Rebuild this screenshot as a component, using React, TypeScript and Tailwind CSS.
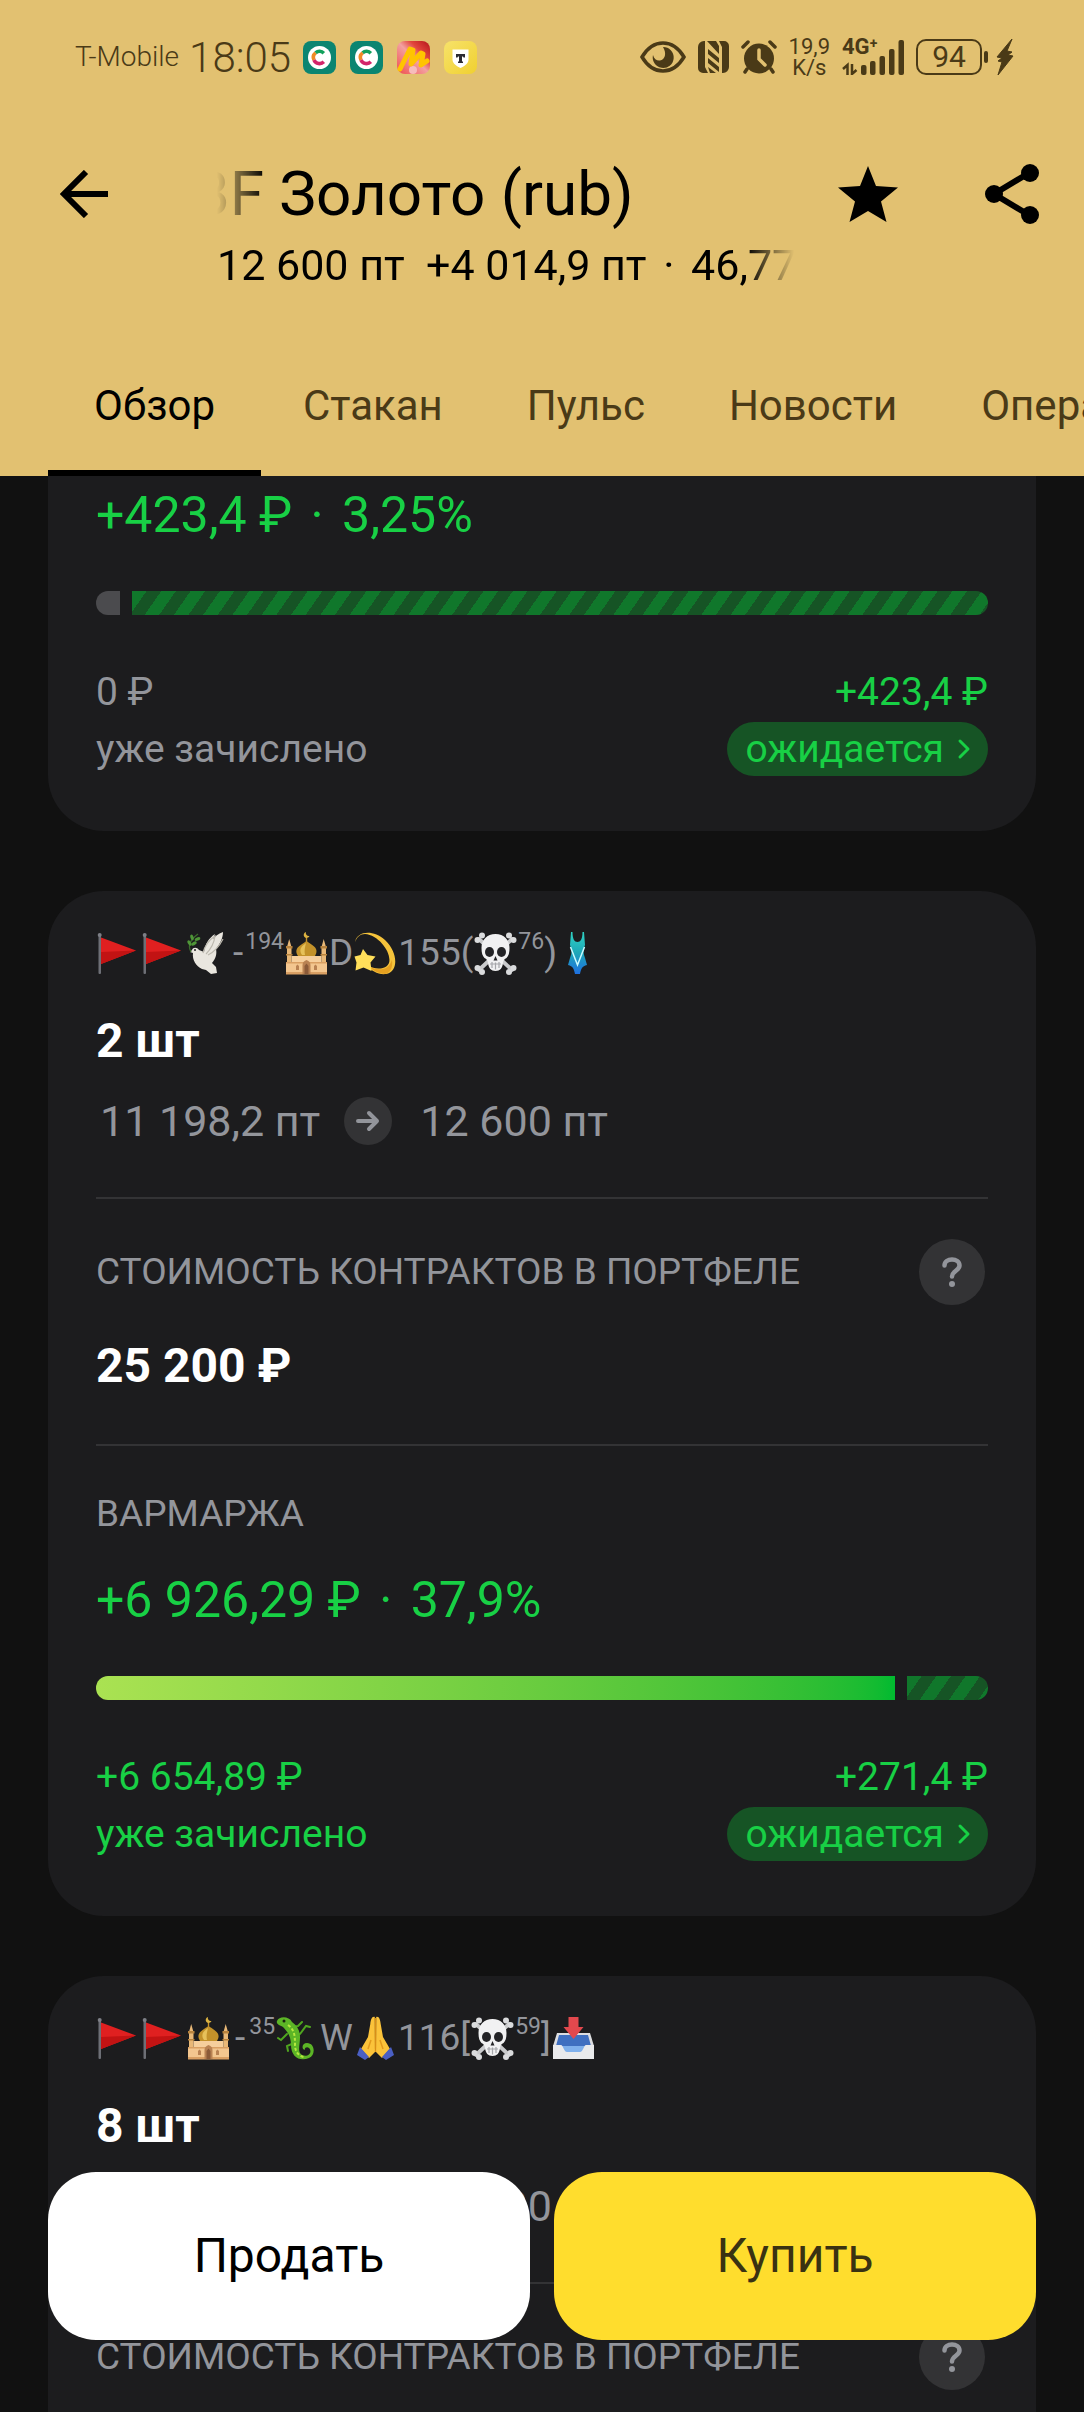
import { useState, type ReactNode } from 'react';

const tabs = ['Обзор', 'Стакан', 'Пульс', 'Новости', 'Операции'];

type Margin = {
  total: string;
  percent: string;
  credited: string;
  expected: string;
  ratio: number;
};

/* ---------- status bar icons ---------- */

function CashbackIcon() {
  return (
    <svg viewBox="0 0 33 33" className="size-[33px]" aria-hidden="true">
      <rect width="33" height="33" rx="8" fill="#0b8571" />
      <circle cx="16.5" cy="16.5" r="11.5" fill="#fff" />
      <g fill="none" strokeWidth="3.6">
        <path d="M12.6 11.8A6 6 0 0 1 20.8 12.2" stroke="#12a05c" />
        <path d="M12.6 11.8A6 6 0 0 0 11 19" stroke="#f08a24" />
        <path d="M11 19A6 6 0 0 0 20.8 20.8" stroke="#d3246a" />
      </g>
    </svg>
  );
}

function MarketIcon() {
  return (
    <svg viewBox="0 0 33 33" className="size-[33px]" aria-hidden="true">
      <defs>
        <linearGradient id="market" x1="0" y1="1" x2="1" y2="0">
          <stop offset="0" stopColor="#ef4b4b" />
          <stop offset=".5" stopColor="#f3a0a0" />
          <stop offset=".7" stopColor="#e2463c" />
          <stop offset="1" stopColor="#b3131b" />
        </linearGradient>
      </defs>
      <rect width="33" height="33" rx="8" fill="url(#market)" />
      <circle cx="16" cy="29" r="4" fill="#f6bcbc" />
      <path
        d="M3 28 13 8l3 1-2 14L24 12l2 1-2 11 6-4"
        fill="none"
        stroke="#ffc400"
        strokeWidth="5"
        strokeLinejoin="round"
        strokeLinecap="round"
      />
    </svg>
  );
}

function BankIcon() {
  return (
    <svg viewBox="0 0 33 33" className="size-[33px]" aria-hidden="true">
      <defs>
        <linearGradient id="bank" x1="0" y1="0" x2="1" y2="1">
          <stop offset="0" stopColor="#f7e26a" />
          <stop offset="1" stopColor="#f0d030" />
        </linearGradient>
      </defs>
      <rect width="33" height="33" rx="8" fill="url(#bank)" />
      <path d="M8.5 8.5h16v10c0 4-4 6.5-8 8.5-4-2-8-4.5-8-8.5z" fill="#fff" />
      <path d="M12 13h9v3.5h-1.5l-.5-1h-1v5h1V22h-5v-1.500h1v-5h-1l-.5 1H12z" fill="#2b2b33" />
    </svg>
  );
}

function EyeIcon() {
  return (
    <svg viewBox="0 0 46 32" className="h-8 w-[46px]" aria-hidden="true">
      <path d="M2 16C8 6 15 2 23 2s15 4 21 14c-6 10-13 14-21 14S8 26 2 16z" fill="none" stroke="currentColor" strokeWidth="3.5" />
      <path d="M23 6a10.5 10.5 0 1 1-10 8c1 4 4 6 7 5.500 5-.8 7-7 3-13.500z" fill="currentColor" />
    </svg>
  );
}

function NfcIcon() {
  return (
    <svg viewBox="0 0 31 32" className="h-8 w-[31px]" aria-hidden="true">
      <path d="M6 0h1v26l3 6H5a5 5 0 0 1-5-5V6a6 6 0 0 1 6-6zM21 0h5a5 5 0 0 1 5 5v21a6 6 0 0 1-6 6h-1V6z" fill="currentColor" />
      <path d="M9 0h9l3 5v8zM10 8l11 9v5L10 13zM10 17l11 9v5L10 22zM10 26l8 6h-6z" fill="currentColor" />
    </svg>
  );
}

function AlarmIcon() {
  return (
    <svg viewBox="0 0 36 34" className="h-[34px] w-9" aria-hidden="true">
      <circle cx="18" cy="18.5" r="15" fill="currentColor" />
      <path d="M2 7l5-5M34 7l-5-5M6 29l-2 3M30 29l2 3" fill="none" stroke="currentColor" strokeWidth="3.5" strokeLinecap="round" />
      <path d="M18 10v9l6 6" fill="none" stroke="#e2c171" strokeWidth="3.5" strokeLinecap="round" />
    </svg>
  );
}

function SignalIcon() {
  return (
    <svg viewBox="0 0 62 36" className="h-9 w-[62px]" aria-hidden="true">
      <g fill="currentColor">
        <rect x="19" y="26" width="5.5" height="10" rx="2" />
        <rect x="28" y="22" width="5.5" height="14" rx="2" />
        <rect x="37.5" y="17" width="5.5" height="19" rx="2" />
        <rect x="47" y="10" width="5.5" height="26" rx="2" />
        <rect x="56.5" y="1" width="5.5" height="35" rx="2" />
      </g>
      <path d="M1 30l4.500-4v10M10 25v10l4.500-4" fill="none" stroke="currentColor" strokeWidth="2.5" />
    </svg>
  );
}

function BoltIcon() {
  return (
    <svg viewBox="0 0 18 38" className="-ml-1 h-[38px] w-[18px]" aria-hidden="true">
      <path d="M16 1 1 19l5 1-4 3 4 1-4 13 15-19-5-1 4-3-5-1z" fill="currentColor" stroke="currentColor" strokeLinejoin="round" />
    </svg>
  );
}

/* ---------- emoji for contract names ---------- */

function Emoji({ label, children }: { label: string; children: ReactNode }) {
  return (
    <svg viewBox="0 0 45 44" className="h-11 w-[45px] shrink-0" role="img" aria-label={label}>
      {children}
    </svg>
  );
}

function Flag() {
  return (
    <Emoji label="флаг">
      <rect x="2.5" y="4" width="2.5" height="39" rx="1" fill="#6d6f76" />
      <circle cx="3.7" cy="4" r="2" fill="#7d7f86" />
      <path d="M5 6.500 40 19.500 5 33z" fill="#e02020" />
      <path d="M5 21 40 19.500 5 33z" fill="#c21313" />
    </Emoji>
  );
}

function Dove() {
  return (
    <Emoji label="голубь">
      <path d="M13 19c-2-3-6-3-7 0l-2 2 3 1c-1 7 3 13 9 16l4 1 5 4 6-1-1-6-4-4c4-5 5-9 4-14 4-5 7-11 7-17-5 2-8 4-10 7l2-5c-6 4-10 10-11 18z" fill="#e9e6df" />
      <path d="M17 22c2-8 6-13 12-17-1 8-4 13-9 18M22 24c6-3 11-8 15-16" fill="none" stroke="#bcb8ae" strokeWidth="1.2" />
      <circle cx="9" cy="19" r="1" fill="#222" />
      <path d="M5 21C1 14 5 8 12 3" fill="none" stroke="#3b6b2c" strokeWidth="1.3" />
      <g fill="#4f9638">
        <ellipse cx="3.5" cy="12" rx="1.6" ry="3" transform="rotate(-30 3.5 12)" />
        <ellipse cx="8" cy="12.5" rx="1.6" ry="3" transform="rotate(60 8 12.5)" />
        <ellipse cx="6" cy="6.5" rx="1.6" ry="3" transform="rotate(-20 6 6.5)" />
        <ellipse cx="11.5" cy="8" rx="1.6" ry="3" transform="rotate(70 11.5 8)" />
      </g>
    </Emoji>
  );
}

function Mosque() {
  return (
    <Emoji label="мечеть">
      <g fill="#e9b877">
        <rect x="3" y="16" width="4.5" height="27" />
        <rect x="37.5" y="16" width="4.5" height="27" />
        <path d="M3 16 5.200 8 7.500 16zM37.500 16 39.700 8 42 16z" />
      </g>
      <g fill="#b8833e">
        <rect x="2" y="15" width="6.5" height="2.5" />
        <rect x="36.5" y="15" width="6.5" height="2.5" />
        <rect x="2" y="23" width="6.5" height="1.5" />
        <rect x="36.5" y="23" width="6.5" height="1.5" />
      </g>
      <path d="M7.500 25h30v18h-30z" fill="#f6cf9c" />
      <path d="M2 32h41v11H2z" fill="#f3c68f" />
      <path d="M2 31h41v1.500H2zM2 41h41v2.500H2z" fill="#d99f63" />
      <path d="M14 25c-5-8 3-11 8.500-15 5.500 4 13.500 7 8.500 15z" fill="#c3922a" />
      <path d="M18 24c-4-6 0-9 4-12-1 4-2 8-1 12z" fill="#e6c15a" />
      <path d="M21.800 6h1.400v5h-1.400z" fill="#c3922a" />
      <path d="M22 1a3 3 0 1 0 3.500 4A3 3 0 0 1 22 1z" fill="#ddb341" />
      <path d="M18.500 43V34c0-3 2-4 4-5 2 1 4 2 4 5v9z" fill="#b98252" />
      <path d="M20.500 43v-8l2-2.500 2 2.500v8z" fill="#8b5a38" />
      <path d="M12 39v-4l1.500-1.500L15 35v4zM30 39v-4l1.500-1.500L33 35v4z" fill="#b98252" />
    </Emoji>
  );
}

function Dizzy() {
  return (
    <Emoji label="падающая звезда">
      <path d="M2 11C4 0 20-2 32 9c13 12 14 32 1 34-7 1-15-3-20-9 9 5 20 5 23-2C39 22 26 4 12 3 7 3 4 6 2 11z" fill="#f5c33b" />
      <path d="M14 34c9 6 21 7 25-5 1 8-2 13-7 14-6 0-13-4-18-9z" fill="#e5a021" />
      <path d="m10 18 4.500 6 8 1.500-5 6 1 8.500-8-3.500-8 3 1-8-2-6 6-1.500z" fill="#ffdf5a" />
    </Emoji>
  );
}

function Skull() {
  return (
    <Emoji label="череп и кости">
      <path d="M6 8 39 39M39 8 6 39" stroke="#c9cacc" strokeWidth="4" strokeLinecap="round" />
      <g fill="#dadbdd">
        <circle cx="4.5" cy="9" r="3" />
        <circle cx="9" cy="4.5" r="3" />
        <circle cx="40.5" cy="9" r="3" />
        <circle cx="36" cy="4.5" r="3" />
        <circle cx="4.5" cy="37" r="3" />
        <circle cx="9" cy="41" r="3" />
        <circle cx="40.5" cy="37" r="3" />
        <circle cx="36" cy="41" r="3" />
      </g>
      <path d="M22.500 3C14 3 8.500 9 8.500 17c0 5 1 8 3 10 2 1 3 2 3.500 5 .5 5 3 8 7.500 8s7-3 7.500-8c.5-3 1.500-4 3.500-5 2-2 3-5 3-10 0-8-5.500-14-14-14z" fill="#f1f1f2" />
      <g fill="#232326">
        <ellipse cx="16.5" cy="21" rx="4.5" ry="5" />
        <ellipse cx="28.5" cy="21" rx="4.5" ry="5" />
        <path d="m22.500 25-2 4.500h4z" />
      </g>
      <path d="M17 33h11M19 31v6M22.500 31.500v7M26 31v6" stroke="#a5a6aa" strokeWidth="1.2" />
    </Emoji>
  );
}

function Swimsuit() {
  return (
    <Emoji label="купальник">
      <defs>
        <linearGradient id="swim" x1="0" y1="0" x2="0" y2="1">
          <stop offset="0" stopColor="#2fd3c4" />
          <stop offset=".5" stopColor="#1da7b8" />
          <stop offset="1" stopColor="#1f6fe0" />
        </linearGradient>
      </defs>
      <path d="M14 1h1.500c0 7 2 10 5 10s5-3 5-10H27l1 13c-2 5-2 8 0 13l2 7c-5 1-6 4-7 9h-5c-1-5-2-8-7-9l2-7c2-5 2-8 0-13z" fill="url(#swim)" />
      <path d="m13.500 16 7 18 7-18" fill="none" stroke="#c9fbff" strokeWidth="1.5" />
    </Emoji>
  );
}

function Lizard() {
  return (
    <Emoji label="ящерица">
      <g fill="none" stroke="#4fa51f" strokeWidth="2" strokeLinecap="round">
        <path d="M15 11l8-1 4-4M12 18l-6 6-3-2M25 18l6-8 4 1M19 27l-7 3 1 5" />
      </g>
      <path d="M2 5c2-5 12-5 15 1 5 4 8 8 8 15 0 8-3 15 2 18 6 3 11-3 7-7-2-2-5 0-4 2-4-1-3-7 2-7 8 0 9 12 2 15-9 4-18-1-18-13 0-8-3-13-8-18-4-2-7-3-6-6z" fill="#5cb526" />
      <path d="M13 9c7 5 7 12 7 20 0 6 3 11 9 12" fill="none" stroke="#b6e83e" strokeWidth="2" strokeDasharray="3 2" />
      <circle cx="9" cy="5" r="1.5" fill="#18230f" />
    </Emoji>
  );
}

function Pray() {
  return (
    <Emoji label="сложенные руки">
      <path d="M21.800 1c-3-1-4 3-4.500 7L15 21 8 33l8 9 6-6zM23.200 1c3-1 4 3 4.500 7L30 21l7 12-8 9-6-6z" fill="#fbc33a" />
      <path d="M22.500 2v34" stroke="#d98f17" strokeWidth="1.3" />
      <path d="m18 24-3 9M27 24l3 9" stroke="#e39a1d" strokeWidth="1.5" />
      <path d="m7 31 9 10-4 3-8-5zM38 31l-9 10 4 3 8-5z" fill="#4a5fc4" />
    </Emoji>
  );
}

function Inbox() {
  return (
    <Emoji label="входящие">
      <path d="M6 17h33l4 13v13H2V30z" fill="#dcdde0" />
      <path d="M8 19h29l3 11H5z" fill="#3f6fc0" />
      <path d="M5 30h35l-8 6H13z" fill="#7fb0ec" />
      <path d="M2 29h8c2 0 3 7 6 7h13c3 0 4-7 6-7h8v14H2z" fill="#e9eaec" />
      <path d="M17.500 1h10v10h5L22.500 23 12.500 11h5z" fill="#e2484d" />
    </Emoji>
  );
}

/* ---------- cards ---------- */

function Dot() {
  return <span className="mx-1.5">·</span>;
}

// raised digits inside a contract name
function Raised({ children }: { children: ReactNode }) {
  return <span className="self-start text-[23px] leading-[22px]">{children}</span>;
}

function MarginBlock({ total, percent, credited, expected, ratio }: Margin) {
  const none = ratio === 0;
  return (
    <>
      <p className="text-[50px] leading-[56px] text-[#18d045]">
        {total} ₽ <Dot /> {percent}
      </p>
      <div className="mt-12 flex h-6 gap-3 overflow-hidden rounded-full">
        <div
          className={none ? 'w-6 bg-[#4b4b4e]' : 'bg-linear-to-r from-[#aae252] to-[#00ba30]'}
          style={none ? undefined : { width: `${ratio * 100}%` }}
        />
        <div className="flex-1 bg-[repeating-linear-gradient(125deg,#10772b_0_12px,#165425_12px_24px)]" />
      </div>
      <div className="mt-[50px] flex justify-between text-[39px] leading-[54px] text-[#18d045]">
        <div className={none ? 'flex flex-col gap-[3px] text-[#93959b]' : 'flex flex-col gap-[3px]'}>
          <span>{credited} ₽</span>
          <span>уже зачислено</span>
        </div>
        <div className="flex flex-col items-end gap-[3px]">
          <span>{expected} ₽</span>
          <button className="flex items-center gap-3 rounded-full bg-[#165425] pr-4 pl-[18px]">
            ожидается
            <svg viewBox="0 0 16 24" className="h-6 w-4" aria-hidden="true">
              <path d="m4 4 8 8-8 8" fill="none" stroke="currentColor" strokeWidth="3" strokeLinecap="round" strokeLinejoin="round" />
            </svg>
          </button>
        </div>
      </div>
    </>
  );
}

type ContractProps = {
  name: ReactNode;
  count: number;
  from: string;
  to: string;
  cost: string;
  margin: Margin;
};

function ContractCard({ name, count, from, to, cost, margin }: ContractProps) {
  return (
    <section className="shrink-0 rounded-[56px] bg-[#1c1c1e] px-12 pt-10 pb-[55px]">
      <div className="flex h-11 items-center text-[37px] leading-[44px] text-[#93959b]">{name}</div>
      <h2 className="mt-[38px] text-[48px] leading-[56px] font-bold text-white">{count} шт</h2>
      <div className="mt-7 flex items-center text-[43px] leading-[48px] text-[#93959b]">
        <span className="ml-1">{from} пт</span>
        <span className="mr-7 ml-6 flex size-12 items-center justify-center rounded-full bg-[#333335]">
          <svg viewBox="0 0 24 24" className="size-6" aria-label="стало" role="img">
            <path d="M2 12h19M13 4l8 8-8 8" fill="none" stroke="currentColor" strokeWidth="4" strokeLinecap="round" strokeLinejoin="round" />
          </svg>
        </span>
        <span>{to} пт</span>
      </div>
      <div className="mt-[52px] flex items-center justify-between border-t-2 border-[#333335] pt-10 pr-[3px]">
        <h3 className="text-[37px] leading-[44px] text-[#93959b]">СТОИМОСТЬ КОНТРАКТОВ В ПОРТФЕЛЕ</h3>
        <button aria-label="Подсказка" className="flex size-[66px] items-center justify-center rounded-full bg-[#333335] text-[#93959b]">
          <svg viewBox="0 0 20 30" className="h-[30px] w-5" aria-hidden="true">
            <path d="M2.500 8.500C2.500 4.500 6 2.500 10 2.500s7.500 2 7.500 6c0 5-7.500 5.500-7.500 11" fill="none" stroke="currentColor" strokeWidth="4.5" strokeLinecap="round" />
            <circle cx="10" cy="27" r="3" fill="currentColor" />
          </svg>
        </button>
      </div>
      <p className="mt-[33px] text-[48px] leading-[56px] font-bold text-white">{cost} ₽</p>
      <h3 className="mt-[50px] mb-9 border-t-2 border-[#333335] pt-[46px] text-[37px] leading-[44px] text-[#93959b]">ВАРМАРЖА</h3>
      <MarginBlock {...margin} />
    </section>
  );
}

export default function App() {
  const [active, setActive] = useState('Обзор');

  return (
    <div className="relative flex h-screen flex-col overflow-hidden bg-[#111111] font-['Roboto',sans-serif]">
      <header className="shrink-0 bg-[#e2c171] text-black">
        <div className="flex h-[114px] items-center justify-between pr-[70px] pl-[75px] text-[#4a3a17]">
          <div className="flex items-center">
            <span className="text-[28px] font-light">T-Mobile</span>
            <time className="ml-2.5 text-[42px] font-light">18:05</time>
            <div className="ml-3 flex gap-3.5">
              <CashbackIcon />
              <CashbackIcon />
              <MarketIcon />
              <BankIcon />
            </div>
          </div>
          <div className="flex items-center gap-3">
            <EyeIcon />
            <NfcIcon />
            <AlarmIcon />
            <span className="flex flex-col items-center text-[22px] leading-[21px]">
              <span>19,9</span>
              <span>K/s</span>
            </span>
            <span className="relative">
              <SignalIcon />
              <span className="absolute -top-1 left-0 flex text-[22px] leading-6 font-bold">
                4G<span className="text-[14px] leading-4">+</span>
              </span>
            </span>
            <span className="flex items-center gap-0.5">
              <span className="flex h-9 w-[66px] items-center justify-center rounded-[10px] border-2 border-current text-[30px] leading-8">94</span>
              <span className="h-3 w-1 rounded-full bg-current" />
            </span>
            <BoltIcon />
          </div>
        </div>

        <div className="flex items-start pt-11 pr-11 pl-[60px]">
          <button aria-label="Назад" className="flex h-[72px] items-center">
            <svg viewBox="0 0 48 48" className="size-12" aria-hidden="true">
              <path d="M48 24H4M26 2 4 24l22 22" fill="none" stroke="currentColor" strokeWidth="6" />
            </svg>
          </button>
          <div className="ml-[109px] flex min-w-0 flex-1 flex-col gap-2 whitespace-nowrap">
            <div className="overflow-hidden [mask-image:linear-gradient(to_right,transparent,black_48px)]">
              <h1 className="-ml-[26px] text-[62px] leading-[72px]">BF Золото (rub)</h1>
            </div>
            <p className="overflow-hidden text-[43px] leading-[54px] [mask-image:linear-gradient(to_left,transparent,black_48px)]">
              12 600 пт&nbsp; +4 014,9 пт <Dot /> 46,77%
            </p>
          </div>
          <button aria-label="В избранное" className="ml-11 flex h-[72px] items-center">
            <svg viewBox="0 0 60 56" className="h-14 w-[60px]" aria-hidden="true">
              <path d="m30 0 8 20 22 1.500-17 14L48.500 56 30 45 11.500 56 17 35.500l-17-14L22 20z" fill="currentColor" />
            </svg>
          </button>
          <button aria-label="Поделиться" className="ml-[86px] flex h-[72px] items-center">
            <svg viewBox="0 0 56 60" className="h-[60px] w-14" aria-hidden="true">
              <path d="M45 9 10 30l35 21" fill="none" stroke="currentColor" strokeWidth="6" />
              <g fill="currentColor">
                <circle cx="46" cy="9" r="9" />
                <circle cx="10" cy="30" r="9" />
                <circle cx="46" cy="51" r="9" />
              </g>
            </svg>
          </button>
        </div>

        <nav className="mt-[42px] flex overflow-hidden pl-12">
          {tabs.map(tab => (
            <button
              key={tab}
              onClick={() => setActive(tab)}
              className={
                tab === active
                  ? 'border-b-[6px] border-black px-[46px] pt-[45px] pb-[37px] text-[42px] leading-[54px]'
                  : 'border-b-[6px] border-transparent px-[42px] pt-[45px] pb-[37px] text-[42px] leading-[54px] text-[#4a3a17]'
              }
            >
              {tab}
            </button>
          ))}
        </nav>
      </header>

      <main className="flex min-h-0 flex-1 flex-col gap-[60px] overflow-hidden px-12">
        <section className="shrink-0 rounded-b-[56px] bg-[#1c1c1e] px-12 pt-[11px] pb-[55px]">
          <MarginBlock total="+423,4" percent="3,25%" credited="0" expected="+423,4" ratio={0} />
        </section>

        <ContractCard
          name={
            <>
              <Flag />
              <Flag />
              <Dove />
              <span className="px-0.5">-</span>
              <Raised>194</Raised>
              <Mosque />
              <span>D</span>
              <Dizzy />
              <span>155(</span>
              <Skull />
              <Raised>76</Raised>
              <span>)</span>
              <Swimsuit />
            </>
          }
          count={2}
          from="11 198,2"
          to="12 600"
          cost="25 200"
          margin={{ total: '+6 926,29', percent: '37,9%', credited: '+6 654,89', expected: '+271,4', ratio: 0.896 }}
        />

        <ContractCard
          name={
            <>
              <Flag />
              <Flag />
              <Mosque />
              <span className="px-1">-</span>
              <Raised>35</Raised>
              <Lizard />
              <span>W</span>
              <Pray />
              <span>116[</span>
              <Skull />
              <Raised>59</Raised>
              <span>]</span>
              <Inbox />
            </>
          }
          count={8}
          from="11 733,4"
          to="12 600"
          cost="100 800"
          margin={{ total: '+6 932,8', percent: '7,38%', credited: '+5 847,2', expected: '+1 085,6', ratio: 0.843 }}
        />
      </main>

      <div className="absolute inset-x-12 bottom-[72px] grid grid-cols-2 gap-6 text-[48px]">
        <button className="h-[168px] rounded-[48px] bg-white text-black">Продать</button>
        <button className="h-[168px] rounded-[48px] bg-[#ffdd2d] text-[#3a3212]">Купить</button>
      </div>
    </div>
  );
}
